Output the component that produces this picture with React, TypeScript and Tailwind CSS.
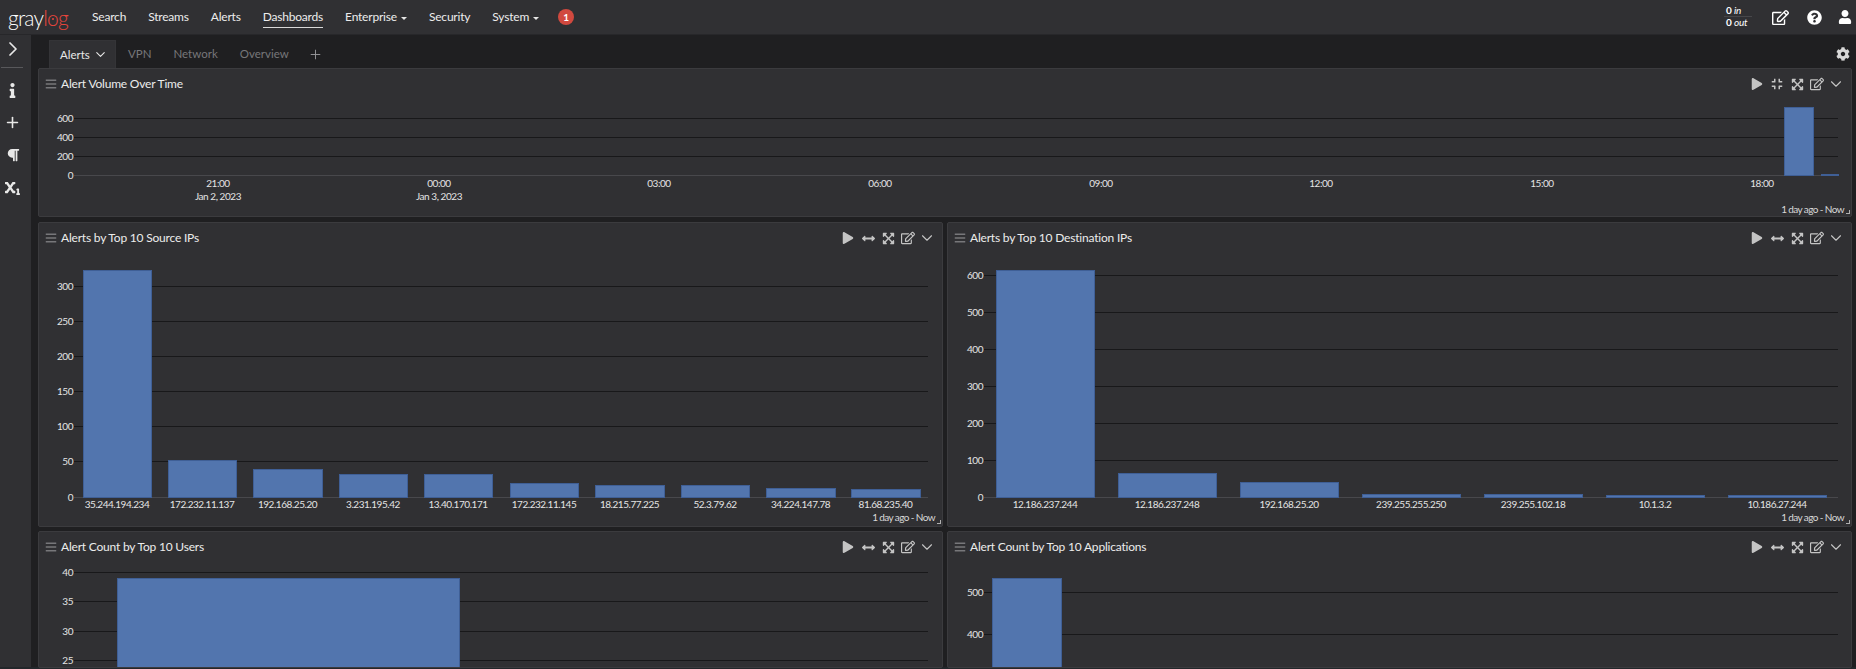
import type { ReactNode } from "react";
import { ChevronDown, ChevronRight, Plus } from "lucide-react";
import {
  FaArrowsAltH,
  FaBars,
  FaCog,
  FaCompress,
  FaExpandArrowsAlt,
  FaInfo,
  FaParagraph,
  FaPlay,
  FaQuestionCircle,
  FaRegEdit,
  FaSubscript,
  FaUser,
} from "react-icons/fa";

type Bar = { x: number; w: number; top: number; label?: string };
type Tick = { y: number; label: string };

const navItems = ["Search", "Streams", "Alerts", "Dashboards", "Enterprise", "Security", "System"];

function Chart({
  x0,
  y0,
  width = 903,
  height,
  left,
  right,
  base,
  ticks,
  bars,
  times,
}: {
  x0: number;
  y0: number;
  width?: number;
  height: number;
  left: number;
  right: number;
  base?: number;
  ticks: Tick[];
  bars: Bar[];
  times?: { x: number; label: string; sub?: string }[];
}) {
  const bottom = y0 + height;
  return (
    <svg
      width={width}
      height={height}
      viewBox={`${x0} ${y0} ${width} ${height}`}
      className="block shrink-0 font-['Lato',sans-serif] text-[10px] tracking-[-0.45px]"
    >
      {ticks.map((t) => (
        <g key={t.label}>
          <line
            x1={left}
            x2={right}
            y1={t.y + 0.5}
            y2={t.y + 0.5}
            stroke={t.label === "0" ? "#48484c" : "#18181a"}
          />
          <text x={left - 1} y={t.y + 4} textAnchor="end" fill="#e4e4e4">
            {t.label}
          </text>
        </g>
      ))}
      {bars.map((b) => (
        <g key={b.x}>
          <rect
            x={b.x + 0.5}
            y={b.top + 0.5}
            width={b.w}
            height={(base ?? bottom + 10) - b.top}
            fill="#5275ae"
            stroke="#3f5f96"
          />
          {b.label && base ? (
            <text x={b.x + b.w / 2} y={base + 11} textAnchor="middle" fill="#e4e4e4">
              {b.label}
            </text>
          ) : null}
        </g>
      ))}
      {times?.map((t) => (
        <g key={t.label} textAnchor="middle" fill="#e4e4e4">
          <text x={t.x} y={187}>
            {t.label}
          </text>
          {t.sub ? (
            <text x={t.x} y={200}>
              {t.sub}
            </text>
          ) : null}
        </g>
      ))}
    </svg>
  );
}

function WidgetIcons({ fit = false }: { fit?: boolean }) {
  return (
    <div className="ml-auto flex items-center pr-[5px] text-[#c4c4c4]">
      <span className="flex w-[20px] justify-center">
        <FaPlay size={12} />
      </span>
      <span className="flex w-[20px] justify-center">
        {fit ? <FaCompress size={12} /> : <FaArrowsAltH size={13} />}
      </span>
      <span className="flex w-[20px] justify-center">
        <FaExpandArrowsAlt size={13} />
      </span>
      <span className="flex w-[19px] justify-center">
        <FaRegEdit size={14} />
      </span>
      <span className="flex w-[20px] justify-center">
        <ChevronDown size={18} strokeWidth={1.5} />
      </span>
    </div>
  );
}

function Widget({
  title,
  fit,
  footer = true,
  className,
  children,
}: {
  title: string;
  fit?: boolean;
  footer?: boolean;
  className: string;
  children: ReactNode;
}) {
  return (
    <section className={`relative overflow-hidden rounded-[2px] border border-[#3b3b3e] bg-[#303033] ${className}`}>
      <header className="flex h-[30px] items-center pl-[6px]">
        <FaBars size={12} className="mr-[4px] text-[#77777a]" />
        <h2 className="text-[12px] font-normal tracking-[-0.2px] text-[#ececec]">{title}</h2>
        <WidgetIcons fit={fit} />
      </header>
      {children}
      {footer ? (
        <>
          <p className="h-[14px] pr-[7px] text-right text-[10px] leading-[14px] tracking-[-0.6px] text-[#d8d8d8]">
            1 day ago - Now
          </p>
          <span className="absolute right-px bottom-[2px] h-[4px] w-[4px] border-r border-b border-[#b0b0b0]" />
        </>
      ) : null}
    </section>
  );
}

function GraylogLogo() {
  return (
    <a className="mr-[25px] flex w-[59px] items-baseline text-[21px] leading-none font-light tracking-[-0.8px]">
      <span className="text-white">gray</span>
      <span className="text-[#e8453c]">l</span>
      <span className="relative text-[#e8453c]">
        o
        <span className="absolute top-[11px] left-[4.5px] h-[2px] w-[2px] rounded-full bg-[#e8453c]" />
      </span>
      <span className="text-[#e8453c]">g</span>
    </a>
  );
}

function TopNav() {
  return (
    <nav className="flex h-[35px] shrink-0 items-center border-b border-[#27272a] bg-[#303033] pl-[8px] text-[12px] tracking-[-0.2px] text-[#ececec]">
      <GraylogLogo />
      <ul className="flex items-center gap-[22px]">
        {navItems.map((item) => (
          <li
            key={item}
            className={`flex items-center gap-[4px] ${item === "Dashboards" ? "h-[20px] translate-y-[1px] border-b border-[#d8d8d8] pb-[2px]" : ""}`}
          >
            {item}
            {item === "Enterprise" || item === "System" ? (
              <span className="mt-[2px] h-0 w-0 border-x-[3px] border-t-[3px] border-x-transparent border-t-[#e6e6e6]" />
            ) : null}
          </li>
        ))}
        <li className="-ml-[3px] flex h-[16px] w-[16px] items-center justify-center rounded-full bg-[#d1493f] text-[10px] font-bold text-white">
          1
        </li>
      </ul>
      <div className="ml-auto flex items-center pr-[3px] text-white">
        <div className="mr-[20px] w-[28px] -translate-y-[1px] text-[10px] leading-[11px]">
          <div className="border-b border-[#47474a] pl-[2px]">
            <b>0</b> <i>in</i>
          </div>
          <div className="pl-[2px]">
            <b>0</b> <i>out</i>
          </div>
        </div>
        <FaRegEdit size={17} className="mr-[18px]" />
        <FaQuestionCircle size={15} className="mr-[16px]" />
        <FaUser size={14} className="mr-[1px]" />
      </div>
    </nav>
  );
}

function SideBar() {
  return (
    <aside className="flex w-[31px] shrink-0 flex-col items-center bg-[#303033] text-[#e8e8e8]">
      <ChevronRight size={24} strokeWidth={1.75} className="mt-[2px] -ml-[5px]" />
      <div className="mt-[6px] mb-[15px] ml-[-7px] h-px w-[22px] bg-[#58585b]" />
      <div className="-ml-[6px] flex flex-col items-center">
        <FaInfo size={15} />
        <Plus size={17} strokeWidth={2.25} className="mt-[16px]" />
        <FaParagraph size={14} className="mt-[17px]" />
        <FaSubscript size={15} className="mt-[18px]" />
      </div>
    </aside>
  );
}

function TabBar() {
  return (
    <div className="flex h-[33px] shrink-0 items-end pl-[11px] text-[11.5px]">
      <div className="flex h-[28px] w-[67px] items-center gap-[3px] border border-b-0 border-[#343437] bg-[#303033] pl-[10px] text-[#e8e8e8]">
        Alerts <ChevronDown size={15} strokeWidth={1.75} />
      </div>
      <div className="ml-px flex h-[28px] items-center text-[#77777a]">
        <span className="px-[11px]">VPN</span>
        <span className="px-[11px]">Network</span>
        <span className="px-[11px]">Overview</span>
        <Plus size={15} strokeWidth={1.5} className="ml-[8px] text-[#98989b]" />
      </div>
      <FaCog size={14} className="mr-[2px] mb-[7px] ml-auto text-[#d8d8d8]" />
    </div>
  );
}

const sourceBars: Bar[] = [
  { x: 83, w: 68, top: 270, label: "35.244.194.234" },
  { x: 168, w: 68, top: 460, label: "172.232.11.137" },
  { x: 253, w: 69, top: 469, label: "192.168.25.20" },
  { x: 339, w: 68, top: 474, label: "3.231.195.42" },
  { x: 424, w: 68, top: 474, label: "13.40.170.171" },
  { x: 510, w: 68, top: 483, label: "172.232.11.145" },
  { x: 595, w: 69, top: 485, label: "18.215.77.225" },
  { x: 681, w: 68, top: 485, label: "52.3.79.62" },
  { x: 766, w: 69, top: 488, label: "34.224.147.78" },
  { x: 851, w: 69, top: 489, label: "81.68.235.40" },
];

const destBars: Bar[] = [
  { x: 996, w: 98, top: 270, label: "12.186.237.244" },
  { x: 1118, w: 98, top: 473, label: "12.186.237.248" },
  { x: 1240, w: 98, top: 482, label: "192.168.25.20" },
  { x: 1362, w: 98, top: 494, label: "239.255.255.250" },
  { x: 1484, w: 98, top: 494, label: "239.255.102.18" },
  { x: 1606, w: 98, top: 495, label: "10.1.3.2" },
  { x: 1728, w: 98, top: 495, label: "10.186.27.244" },
];

export default function App() {
  return (
    <div className="flex h-[669px] w-[1856px] flex-col overflow-hidden bg-[#1f1f21] font-['Lato',sans-serif]">
      <TopNav />
      <div className="flex min-h-0 flex-1">
        <SideBar />
        <main className="flex min-w-0 flex-1 flex-col pr-[4px] pl-[7px]">
          <TabBar />
          <Widget title="Alert Volume Over Time" fit className="h-[149px] shrink-0">
            <Chart
              x0={39}
              y0={99}
              width={1812}
              height={103}
              left={74}
              right={1838}
              base={175}
              ticks={[
                { y: 118, label: "600" },
                { y: 137, label: "400" },
                { y: 156, label: "200" },
                { y: 175, label: "0" },
              ]}
              bars={[
                { x: 1784, w: 29, top: 107 },
                { x: 1821, w: 17, top: 174 },
              ]}
              times={[
                { x: 218, label: "21:00", sub: "Jan 2, 2023" },
                { x: 439, label: "00:00", sub: "Jan 3, 2023" },
                { x: 659, label: "03:00" },
                { x: 880, label: "06:00" },
                { x: 1101, label: "09:00" },
                { x: 1321, label: "12:00" },
                { x: 1542, label: "15:00" },
                { x: 1762, label: "18:00" },
              ]}
            />
          </Widget>
          <div className="mt-[5px] grid shrink-0 grid-cols-2 gap-x-[4px] gap-y-[4px]">
            <Widget title="Alerts by Top 10 Source IPs" className="h-[305px]">
              <Chart
                x0={39}
                y0={253}
                height={257}
                left={74}
                right={928}
                base={497}
                ticks={[
                  { y: 286, label: "300" },
                  { y: 321, label: "250" },
                  { y: 356, label: "200" },
                  { y: 391, label: "150" },
                  { y: 426, label: "100" },
                  { y: 461, label: "50" },
                  { y: 497, label: "0" },
                ]}
                bars={sourceBars}
              />
            </Widget>
            <Widget title="Alerts by Top 10 Destination IPs" className="h-[305px]">
              <Chart
                x0={948}
                y0={253}
                height={257}
                left={984}
                right={1838}
                base={497}
                ticks={[
                  { y: 275, label: "600" },
                  { y: 312, label: "500" },
                  { y: 349, label: "400" },
                  { y: 386, label: "300" },
                  { y: 423, label: "200" },
                  { y: 460, label: "100" },
                  { y: 497, label: "0" },
                ]}
                bars={destBars}
              />
            </Widget>
            <Widget title="Alert Count by Top 10 Users" footer={false} className="h-[137px]">
              <Chart
                x0={39}
                y0={562}
                height={107}
                left={74}
                right={928}
                ticks={[
                  { y: 572, label: "40" },
                  { y: 601, label: "35" },
                  { y: 631, label: "30" },
                  { y: 660, label: "25" },
                ]}
                bars={[{ x: 117, w: 342, top: 578 }]}
              />
            </Widget>
            <Widget title="Alert Count by Top 10 Applications" footer={false} className="h-[137px]">
              <Chart
                x0={948}
                y0={562}
                height={107}
                left={984}
                right={1838}
                ticks={[
                  { y: 592, label: "500" },
                  { y: 634, label: "400" },
                ]}
                bars={[{ x: 992, w: 69, top: 578 }]}
              />
            </Widget>
          </div>
        </main>
      </div>
      <div className="h-[2px] shrink-0 bg-[#23272b]" />
    </div>
  );
}
